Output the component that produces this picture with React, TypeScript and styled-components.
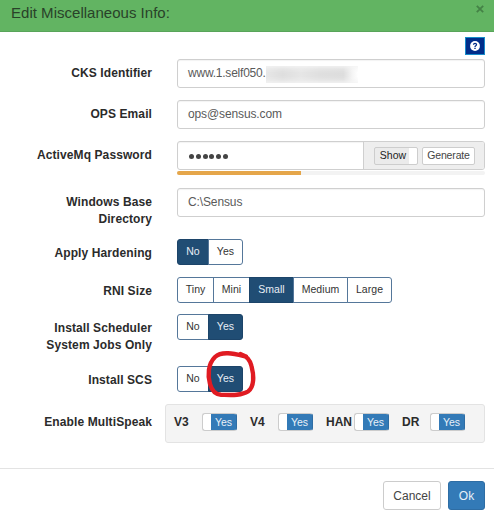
import React from 'react';
import styled, { createGlobalStyle } from 'styled-components';

const GlobalStyle = createGlobalStyle`
  * { box-sizing: border-box; }
  body {
    margin: 0;
    background: #fff;
    color: #2b2b2b;
    font: 12px/17px "Liberation Sans", Arial, sans-serif;
    overflow: hidden;
  }
  button { font-family: inherit; margin: 0; }
`;

const Dialog = styled.div`
  width: 494px;
  height: 514px;
  display: flex;
  flex-direction: column;
`;

const Header = styled.header`
  height: 32px;
  flex: none;
  display: flex;
  justify-content: space-between;
  padding: 3px 9px 0 11px;
  background: #62b462;
  border-bottom: 1px solid #58a45a;
`;

const Title = styled.h4`
  margin: 0;
  font-size: 15px;
  line-height: 20px;
  font-weight: 400;
  letter-spacing: 0.02px;
  color: #294229;
`;

const Close = styled.button`
  width: 10px;
  height: 12px;
  padding: 0;
  border: 0;
  background: none;
  display: flex;
  align-items: center;
  justify-content: center;
`;

const Toolbar = styled.div`
  height: 27px;
  flex: none;
  display: flex;
  justify-content: flex-end;
  padding: 5px 9px 0 0;
`;

const HelpButton = styled.button`
  width: 20px;
  height: 18px;
  padding: 0 0 1px;
  display: flex;
  align-items: center;
  justify-content: center;
  background: #012d8a;
  border: 1px solid #188ccb;
`;

const Row = styled.div<{ $h: number }>`
  height: ${(p) => p.$h}px;
  flex: none;
  display: flex;
  align-items: flex-start;
`;

const Label = styled.label<{ $top?: number }>`
  width: 152px;
  flex: none;
  margin-right: 25px;
  padding-top: ${(p) => p.$top ?? 6}px;
  text-align: right;
  font-weight: 700;
  letter-spacing: 0.1px;
  white-space: pre-line;
`;

const Control = styled.div`
  width: 308px;
`;

const Field = styled.div<{ $track?: number }>`
  height: 29px;
  display: flex;
  align-items: center;
  padding-left: 10px;
  border: 1px solid #cfcfcf;
  border-radius: 3px;
  background: #fff;
  box-shadow: inset 0 1px 1px rgba(0, 0, 0, 0.05);
  color: #5a5a5a;
  letter-spacing: ${(p) => p.$track ?? -0.12}px;
  overflow: hidden;
`;

const Redaction = styled.span`
  width: 92px;
  height: 17px;
  margin-top: 2px;
  background: linear-gradient(90deg, #e7e7e7, #dedede 18%, #e6e6e6 38%, #dfdfdf 58%, #dddddd 84%, #f5f5f5 94%, #fff);
  box-shadow: inset 0 6px 5px -4px #f4f4f4, inset 0 -6px 5px -4px #f4f4f4;
`;

const Dots = styled.div`
  flex: 1;
  display: flex;
  gap: 1.8px;
  padding: 1px 0 0 1px;
`;

const Dot = styled.i`
  width: 5px;
  height: 5px;
  border-radius: 50%;
  background: #444;
`;

const Addon = styled.div`
  width: 121px;
  height: 100%;
  display: flex;
  align-items: center;
  gap: 4px;
  padding-left: 10px;
  border-left: 1px solid #cfcfcf;
  background: #eee;
  letter-spacing: 0;
`;

const MiniButton = styled.button<{ $w: number; $toggle?: boolean }>`
  width: ${(p) => p.$w}px;
  height: 18px;
  padding: 0 ${(p) => (p.$toggle ? 6 : 0)}px 1px 0;
  border: 1px solid #cdcdcd;
  border-radius: 2px;
  background: ${(p) => (p.$toggle ? 'linear-gradient(90deg, #ebebeb 34px, #fff 34px)' : '#fff')};
  color: ${(p) => (p.$toggle ? '#222' : '#444')};
  font-size: 10.5px;
  line-height: 14px;
  letter-spacing: ${(p) => (p.$toggle ? 0 : -0.15)}px;
  text-align: center;
`;

const Meter = styled.div`
  height: 4px;
  margin-top: 1px;
  border-radius: 2px;
  overflow: hidden;
  background: #f3f3f3;
`;

const MeterBar = styled.div`
  width: 124px;
  height: 100%;
  background: #e5a64a;
`;

const Group = styled.div`
  display: flex;
`;

const Choice = styled.button<{ $w: number; $on: boolean }>`
  width: ${(p) => p.$w}px;
  height: 26px;
  margin-right: -1px;
  padding: 0 0 2px;
  border: 1px solid ${(p) => (p.$on ? '#1c4469' : '#55779a')};
  background: ${(p) => (p.$on ? '#204d74' : '#fff')};
  color: ${(p) => (p.$on ? '#e8eef4' : '#333')};
  font-size: 10.5px;
  letter-spacing: 0.05px;
  &:first-child { border-radius: 3px 0 0 3px; }
  &:last-child { border-radius: 0 3px 3px 0; }
`;

const Circled = styled.div`
  position: relative;
  width: max-content;
`;

const Marker = styled.svg`
  position: absolute;
  left: 26px;
  top: -18px;
  pointer-events: none;
`;

const Well = styled.div`
  width: 320px;
  height: 39px;
  display: flex;
  margin-left: -12px;
  padding: 8px 0 0 8px;
  background: #f4f4f4;
  border: 1px solid #e3e3e3;
  border-radius: 3px;
`;

const Protocol = styled.div`
  width: 76px;
  height: 18px;
  display: flex;
  align-items: center;
`;

const ProtocolName = styled.b`
  width: 28px;
`;

const Switch = styled.button`
  width: 35px;
  height: 18px;
  flex: none;
  padding: 0 0 0 8px;
  border: 1px solid #ccc;
  border-right-color: #2e6da4;
  border-radius: 3px;
  background: linear-gradient(90deg, #fff 8px, #337ab7 8px);
  color: #e8f0f7;
  font-size: 10.5px;
  line-height: 16px;
`;

const Footer = styled.footer`
  height: 46px;
  flex: none;
  display: flex;
  justify-content: flex-end;
  gap: 7px;
  padding: 12px 9px 0 0;
  border-top: 1px solid #e3e3e3;
`;

const ActionButton = styled.button<{ $w: number; $primary?: boolean }>`
  width: ${(p) => p.$w}px;
  height: 29px;
  padding: 0;
  border: 1px solid ${(p) => (p.$primary ? '#2e6da4' : '#ccc')};
  border-radius: 3px;
  background: ${(p) => (p.$primary ? '#337ab7' : '#fff')};
  color: ${(p) => (p.$primary ? '#e8f0f7' : '#444')};
  font-size: 12px;
`;

type Option = [name: string, width: number];

const YES_NO: Option[] = [['No', 32], ['Yes', 35]];
const SIZES: Option[] = [['Tiny', 37], ['Mini', 37], ['Small', 45], ['Medium', 55], ['Large', 45]];

function Choices({ options, value }: { options: Option[]; value: string }) {
  return (
    <Group>
      {options.map(([name, width]) => (
        <Choice key={name} $w={width} $on={name === value}>{name}</Choice>
      ))}
    </Group>
  );
}

export default function App() {
  return (
    <>
      <GlobalStyle />
      <Dialog>
        <Header>
          <Title>Edit Miscellaneous Info:</Title>
          <Close aria-label="Close">
            <svg width="8" height="8" viewBox="0 0 8 8" stroke="#448246" strokeWidth="1.8">
              <path d="M.8.8 7.2 7.2M7.2.8.8 7.2" />
            </svg>
          </Close>
        </Header>
        <Toolbar>
          <HelpButton aria-label="Help">
            <svg width="10" height="10" viewBox="0 0 10 10" fill="none">
              <circle cx="5" cy="5" r="4.9" fill="#fff" />
              <path d="M3.5 3.8C3.6 1.9 6.6 2 6.5 3.8 6.4 4.8 5 4.7 5 5.9" stroke="#012d8a" strokeWidth="1.3" />
              <path d="M4.3 6.8h1.4v1.3H4.3z" fill="#012d8a" />
            </svg>
          </HelpButton>
        </Toolbar>
        <Row $h={41}>
          <Label>CKS Identifier</Label>
          <Control><Field $track={-0.22}>www.1.self050.<Redaction /></Field></Control>
        </Row>
        <Row $h={41}>
          <Label>OPS Email</Label>
          <Control><Field>ops@sensus.com</Field></Control>
        </Row>
        <Row $h={47}>
          <Label>ActiveMq Password</Label>
          <Control>
            <Field>
              <Dots>{[0, 1, 2, 3, 4, 5].map((n) => <Dot key={n} />)}</Dots>
              <Addon>
                <MiniButton $w={44} $toggle>Show</MiniButton>
                <MiniButton $w={53}>Generate</MiniButton>
              </Addon>
            </Field>
            <Meter><MeterBar /></Meter>
          </Control>
        </Row>
        <Row $h={51}>
          <Label>{'Windows Base\nDirectory'}</Label>
          <Control><Field>C:\Sensus</Field></Control>
        </Row>
        <Row $h={38}>
          <Label>Apply Hardening</Label>
          <Choices options={YES_NO} value="No" />
        </Row>
        <Row $h={37}>
          <Label>RNI Size</Label>
          <Choices options={SIZES} value="Small" />
        </Row>
        <Row $h={52}>
          <Label>{'Install Scheduler\nSystem Jobs Only'}</Label>
          <Choices options={YES_NO} value="Yes" />
        </Row>
        <Row $h={38}>
          <Label>Install SCS</Label>
          <Circled>
            <Choices options={YES_NO} value="Yes" />
            <Marker width="56" height="56" viewBox="203 348 56 56" fill="none" stroke="#e01b22" strokeWidth="4.4" strokeLinecap="round" strokeLinejoin="round">
              <path d="M246 356.500C235 354 222 350.500 215 357 208 364 207.500 375 210 384 212 391 216 394.500 221 394.800C230 395 241 396 248 391.500 254.500 387 254 375 251.500 366 250 360 247 356 240.500 354" />
            </Marker>
          </Circled>
        </Row>
        <Row $h={64}>
          <Label $top={10}>Enable MultiSpeak</Label>
          <Well>
            {['V3', 'V4', 'HAN', 'DR'].map((name) => (
              <Protocol key={name}>
                <ProtocolName>{name}</ProtocolName>
                <Switch>Yes</Switch>
              </Protocol>
            ))}
          </Well>
        </Row>
        <Footer>
          <ActionButton $w={58}>Cancel</ActionButton>
          <ActionButton $w={37} $primary>Ok</ActionButton>
        </Footer>
      </Dialog>
    </>
  );
}
